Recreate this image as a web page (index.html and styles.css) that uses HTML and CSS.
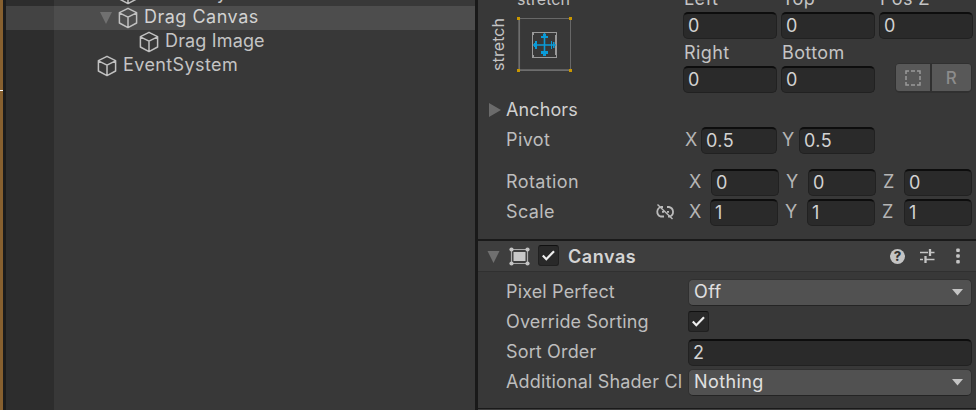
FILE: index.html
```html
<!DOCTYPE html>
<html lang="en">
<head>
<meta charset="utf-8">
<title>Editor</title>
<link rel="stylesheet" href="styles.css">
</head>
<body>
<svg class="defs" width="0" height="0">
  <symbol id="cube" viewBox="0 0 20 22"><path d="M10 1.3 18.6 5.6V16L10 20.6 1.4 16V5.6ZM1.4 5.8 10 10.2 18.6 5.8M10 10.2V20.4" fill="none" stroke="#c0c0c0" stroke-width="1.5" stroke-linejoin="round"/></symbol>
  <symbol id="check" viewBox="0 0 21 21"><path d="M4.800 10.600 8.300 14.200 16 6.200" fill="none" stroke="#eee" stroke-width="2.2"/></symbol>
  <symbol id="down" viewBox="0 0 12 12"><path d="M0 0H12L6 12Z" fill="#707070"/></symbol>
  <symbol id="caret" viewBox="0 0 11 7"><path d="M0 0H11L5.500 6.500Z" fill="#c4c4c4"/></symbol>
</svg>
<div class="app">
  <div class="edge"><div class="tick"></div></div>
  <div class="seam"></div>
  <div class="hierarchy">
    <div class="node cut"><svg class="fold"><use href="#down"/></svg><svg class="cube"><use href="#cube"/></svg><span>Inventory</span></div>
    <div class="node selected"><svg class="fold"><use href="#down"/></svg><svg class="cube"><use href="#cube"/></svg><span>Drag Canvas</span></div>
    <div class="node child"><svg class="cube"><use href="#cube"/></svg><span>Drag Image</span></div>
    <div class="node root"><svg class="cube"><use href="#cube"/></svg><span>EventSystem</span></div>
  </div>
  <div class="divider"></div>
  <div class="inspector">
    <div class="rect">
      <div class="preset">
        <div class="side">stretch</div>
        <div class="figure">
          <div class="caption">stretch</div>
          <svg class="anchor" width="56" height="56" viewBox="0 0 56 56">
            <path d="M2 1.500H53.500V54" fill="none" stroke="#686868" stroke-width="1"/>
            <path d="M2.200 2V53.200H54" fill="none" stroke="#6e6e6e" stroke-width="1.700"/>
            <rect x="15.500" y="15.500" width="24" height="25" fill="none" stroke="#999"/>
            <path d="M16.500 16V18M16.500 38V40M38.500 18V38" stroke="#999"/>
            <path d="M27.500 16V39M16 28H39" stroke="#0a9bd8" stroke-width="1.600"/>
            <path d="M26 17H29V19H31V21H24V19H26ZM24 34H31V37H29V39H26V37H24ZM17 26H18V24H20V32H18V30H17ZM34 24H35V32H34ZM36 25H37.500V31H36Z" fill="#0a9bd8"/>
            <path d="M0 0H3V3H0ZM52 0H55V3H52ZM0 52H3V55H0ZM52 52H55V55H52Z" fill="#c99700"/>
          </svg>
        </div>
      </div>
      <div class="offsets">
        <label>Left</label><label>Top</label><label>Pos Z</label>
        <div class="field">0</div><div class="field">0</div><div class="field">0</div>
        <label>Right</label><label>Bottom</label><span></span>
        <div class="field">0</div><div class="field">0</div>
        <div class="modes">
          <div class="mode"><svg width="16" height="16" viewBox="0 0 16 16"><path d="M1 4V1H4M12 1H15V4M15 12V15H12M4 15H1V12M6 1H10M6 15H10M1 6V10M15 6V10" fill="none" stroke="#999" stroke-width="1.500"/></svg></div>
          <div class="mode raw">R</div>
        </div>
      </div>
    </div>
    <div class="row anchors"><svg class="closed" width="12" height="14" viewBox="0 0 12 14"><path d="M0 0 12 7 0 14Z" fill="#6b6b6b"/></svg><span class="name bright">Anchors</span></div>
    <div class="row"><span class="name">Pivot</span>
      <div class="pivot"><b>X</b><div class="field">0.5</div><b>Y</b><div class="field">0.5</div></div></div>
    <div class="row rotation"><span class="name">Rotation</span>
      <div class="vector"><b>X</b><div class="field">0</div><b>Y</b><div class="field">0</div><b>Z</b><div class="field">0</div></div></div>
    <div class="row"><span class="name">Scale</span>
      <svg class="link" width="20" height="18" viewBox="0 0 20 18"><path d="M8 4H6A5 5 0 0 0 5.500 13.500H9M12 4H14A5 5 0 0 1 15 13.500H13M7 8.800H9M12 8.800H14" fill="none" stroke="#bbb" stroke-width="1.800"/><path d="M2.500 1.500 17.500 16" stroke="#bbb" stroke-width="1.400"/></svg>
      <div class="vector scale"><b>X</b><div class="field">1</div><b>Y</b><div class="field">1</div><b>Z</b><div class="field">1</div></div></div>
    <div class="header">
      <svg class="fold"><use href="#down"/></svg>
      <svg class="canvas-icon" width="21" height="19" viewBox="0 0 21 19"><path d="M2.500 2.500H18.500V16.500H2.500Z" fill="none" stroke="#aaa" stroke-width="1.200"/><path d="M4.500 5H16.500V14H4.500Z" fill="#c8c8c8"/><g fill="#c4c4c4"><circle cx="2.500" cy="2.500" r="2.100"/><circle cx="18.500" cy="2.500" r="2.100"/><circle cx="2.500" cy="16.500" r="2.100"/><circle cx="18.500" cy="16.500" r="2.100"/></g></svg>
      <div class="box"><svg width="21" height="21"><use href="#check"/></svg></div>
      <span class="title">Canvas</span>
      <div class="tools">
        <div class="help">?</div>
        <svg width="15" height="16" viewBox="0 0 15 16"><path d="M0 4.500H8M10 4.500H14.500M0 11.500H3M5.500 11.500H14.500" stroke="#c4c4c4" stroke-width="1.300"/><path d="M10 1V8M5.500 8V15" stroke="#c4c4c4" stroke-width="2.300"/></svg>
        <svg width="4" height="16" viewBox="0 0 4 16"><g fill="#c4c4c4"><rect x=".2" y=".5" width="3.600" height="3.600" rx="1"/><rect x=".2" y="6.200" width="3.600" height="3.600" rx="1"/><rect x=".2" y="11.900" width="3.600" height="3.600" rx="1"/></g></svg>
      </div>
    </div>
    <div class="component">
      <div class="row"><span class="name">Pixel Perfect</span><div class="select"><span>Off</span><svg width="11" height="7"><use href="#caret"/></svg></div></div>
      <div class="row"><span class="name">Override Sorting</span><div class="box"><svg width="21" height="21"><use href="#check"/></svg></div></div>
      <div class="row"><span class="name">Sort Order</span><div class="field">2</div></div>
      <div class="row"><span class="name">Additional Shader Cl</span><div class="select"><span>Nothing</span><svg width="11" height="7"><use href="#caret"/></svg></div></div>
    </div>
    <div class="end"></div>
  </div>
</div>
</body>
</html>
```
FILE: styles.css
```css
* { box-sizing: border-box; }
body { margin: 0; overflow: hidden; background: #383838; color: #c4c4c4; font: 18px/24px Inter, sans-serif; letter-spacing: .4px; }
svg { display: block; flex: none; }
.defs { position: absolute; }
.app { display: flex; width: 976px; height: 410px; overflow: hidden; }
.edge { width: 3px; background: #87602f; padding-top: 90px; }
.tick { height: 1px; background: #fff; }
.seam { width: 3px; background: #1c1c1c; }
.hierarchy { width: 469px; background: linear-gradient(90deg, #2d2d2d 48px, #383838 48px); overflow: hidden; }
.node { display: flex; align-items: center; height: 24px; padding-left: 94px; white-space: nowrap; }
.node span { margin-top: -2px; }
.node.cut { margin-top: -18px; }
.node.selected { background: linear-gradient(90deg, #434343 48px, #4d4d4d 48px); color: #d2d2d2; letter-spacing: .5px; }
.node.child { padding-left: 133px; letter-spacing: .15px; }
.node.root { padding-left: 91px; }
.fold { width: 12px; height: 12px; }
.cube { width: 20px; height: 22px; margin-right: 6px; }
.node .fold { margin-right: 6px; }
.divider { width: 3px; background: #191919; }
.inspector { width: 498px; height: 410px; overflow: hidden; display: flex; flex-direction: column; }
.rect { display: flex; height: 95px; flex: none; }
.preset { display: flex; width: 205px; padding-left: 11px; font-size: 16px; line-height: 18px; letter-spacing: .1px; }
.side { writing-mode: vertical-rl; transform: rotate(180deg); height: 54px; margin-top: 17px; width: 18px; white-space: nowrap; }
.figure { margin: -10px 0 0 10px; }
.caption { height: 27px; width: 60px; }
.offsets { display: grid; grid-template-columns: 94px 94px 94px; grid-template-rows: repeat(4, 27px); column-gap: 4px; margin-top: -15px; }
.offsets label { padding: 2px 0 0 1px; line-height: 24px; }
.field { height: 27px; background: #2a2a2a; border: 1px solid #212121; border-top: 2px solid #0d0d0d; border-radius: 5px; padding-left: 4px; line-height: 24px; color: #d2d2d2; }
.modes { display: flex; gap: 2px; height: 30px; width: 77px; margin: -3px 0 0 16px; padding: 1px; background: #303030; border-radius: 5px; }
.mode { display: flex; align-items: center; justify-content: center; width: 34px; height: 27px; background: #585858; border-radius: 3px 0 0 3px; }
.mode.raw { width: 39px; border-radius: 0 3px 3px 0; color: #8c8c8c; font-size: 17px; font-weight: 500; }
.row { display: flex; align-items: center; height: 30px; flex: none; padding-left: 28px; }
.name { width: 182px; flex: none; white-space: nowrap; overflow: hidden; color: #bdbdbd; }
.name.bright { color: #d0d0d0; letter-spacing: .1px; }
.anchors { padding-left: 11px; }
.closed { margin-right: 5px; }
.row b { font-weight: 400; color: #b5b5b5; }
.pivot { display: grid; grid-template-columns: 16px 76px 22px 76px; margin-left: -3px; align-items: center; }
.pivot b:nth-of-type(2) { padding-left: 5px; }
.rotation { margin-top: 12px; }
.vector { display: grid; grid-template-columns: 22px 68px 29px 68px 28px 68px; margin-left: 1px; align-items: center; }
.vector b:nth-of-type(n+2) { padding-left: 7px; }
.scale { grid-template-columns: 21px 68px 29px 68px 29px 68px; margin-left: 14px; }
.row:has(.link) .name { width: 149px; }
.link { margin: -1px 0 0; }
.header { display: flex; align-items: center; height: 33px; flex: none; margin-top: 12px; padding-left: 9px; background: #3e3e3e; border-top: 2px solid #1a1a1a; border-bottom: 1px solid #303030; }
.canvas-icon { margin: 0 8px 0 9px; }
.header .fold { width: 13px; margin-top: 1px; }
.box { width: 21px; height: 21px; background: #292929; border: 1px solid #202020; border-top-color: #101010; border-radius: 3px; }
.header .box { margin-top: -1px; }
.component .box { margin-top: -1px; }
.box svg { margin: -1px; }
.title { margin: 1px 0 0 9px; font-weight: 600; color: #d4d4d4; letter-spacing: .55px; }
.tools { display: flex; align-items: center; margin-left: auto; padding-right: 16px; }
.help { width: 15px; height: 15px; margin-right: 15px; border-radius: 50%; background: #c4c4c4; color: #333; font: 800 13px/15px Inter, sans-serif; letter-spacing: 0; text-align: center; }
.tools svg:last-child { margin-left: 21px; }
.component { padding-top: 5px; }
.component .name { width: 179px; margin-right: 3px; letter-spacing: .15px; }
.component .field { width: 284px; }
.select { display: flex; align-items: center; justify-content: space-between; width: 284px; height: 27px; padding: 0 8px 0 5px; background: #515151; border: 1px solid #303030; border-bottom-color: #242424; border-radius: 5px; color: #e0e0e0; }
.end { margin-top: 11px; height: 3px; border-top: 1px solid #1a1a1a; background: #3e3e3e; flex: none; }
```
